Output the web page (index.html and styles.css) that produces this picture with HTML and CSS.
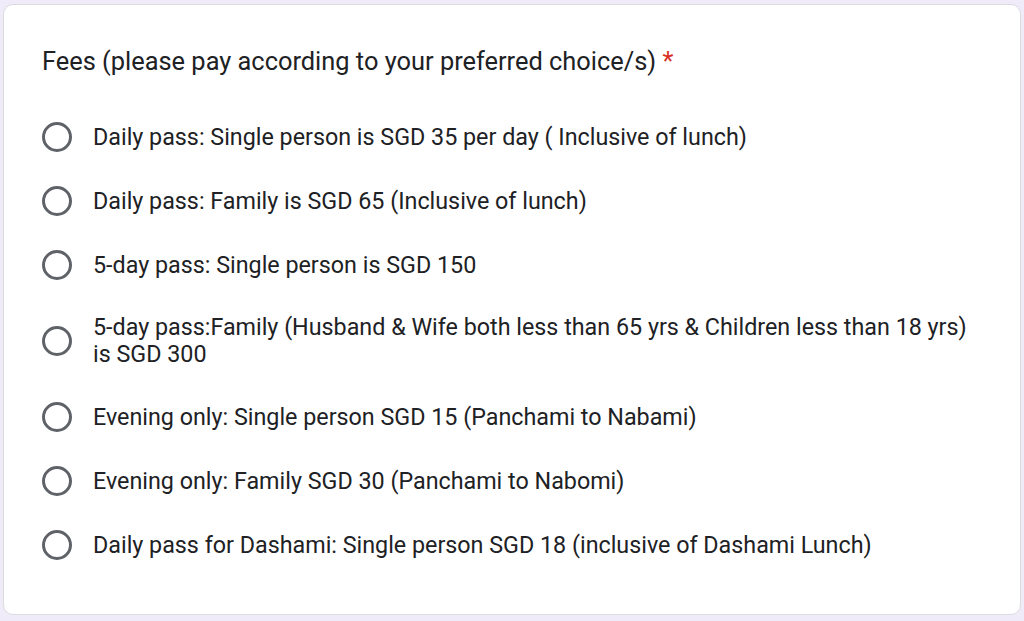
FILE: index.html
```html
<!DOCTYPE html>
<html lang="en">
<head>
    <meta charset="UTF-8">
    <meta name="viewport" content="width=device-width, initial-scale=1.0">
    <title>Fees</title>
    <link rel="stylesheet" href="styles.css">
</head>
<body>

<div class="card">
    <div class="question">
        Fees (please pay according to your preferred choice/s) <span class="required">*</span>
    </div>

    <div class="options">
        <label class="option">
            <span class="radio"></span>
            <span class="option-text">Daily pass: Single person is SGD 35 per day ( Inclusive of lunch)</span>
        </label>
        <label class="option">
            <span class="radio"></span>
            <span class="option-text">Daily pass: Family is SGD 65 (Inclusive of lunch)</span>
        </label>
        <label class="option">
            <span class="radio"></span>
            <span class="option-text">5-day pass: Single person is SGD 150</span>
        </label>
        <label class="option">
            <span class="radio"></span>
            <span class="option-text">5-day pass:Family (Husband &amp; Wife both less than 65 yrs &amp; Children less than 18 yrs) is SGD 300</span>
        </label>
        <label class="option">
            <span class="radio"></span>
            <span class="option-text">Evening only: Single person SGD 15 (Panchami to Nabami)</span>
        </label>
        <label class="option">
            <span class="radio"></span>
            <span class="option-text">Evening only: Family SGD 30 (Panchami to Nabomi)</span>
        </label>
        <label class="option">
            <span class="radio"></span>
            <span class="option-text">Daily pass for Dashami: Single person SGD 18 (inclusive of Dashami Lunch)</span>
        </label>
    </div>
</div>

</body>
</html>
```

FILE: styles.css
```css
body {
    margin: 0;
    padding: 4px 3px 4px 3px;
    background-color: #f0ebf8;
    font-family: Roboto, "Liberation Sans", Arial, sans-serif;
    color: #202124;
}
.card {
    background-color: #fff;
    border: 1px solid #dadce0;
    border-radius: 10px;
    padding: 40px 40px 54px 38px;
    height: 611px;
    box-sizing: border-box;
}
.question {
    font-size: 25.4px;
    line-height: 32px;
    margin-bottom: 45px;
}
.required {
    color: #d93025;
}
.options {
    display: flex;
    flex-direction: column;
    gap: 34px;
}
.option {
    display: flex;
    align-items: center;
    gap: 21px;
}
.radio {
    flex: none;
    width: 30px;
    height: 30px;
    border: 3px solid #5f6368;
    border-radius: 50%;
    box-sizing: border-box;
}
.option-text {
    font-size: 23.3px;
    line-height: 27px;
}
```
